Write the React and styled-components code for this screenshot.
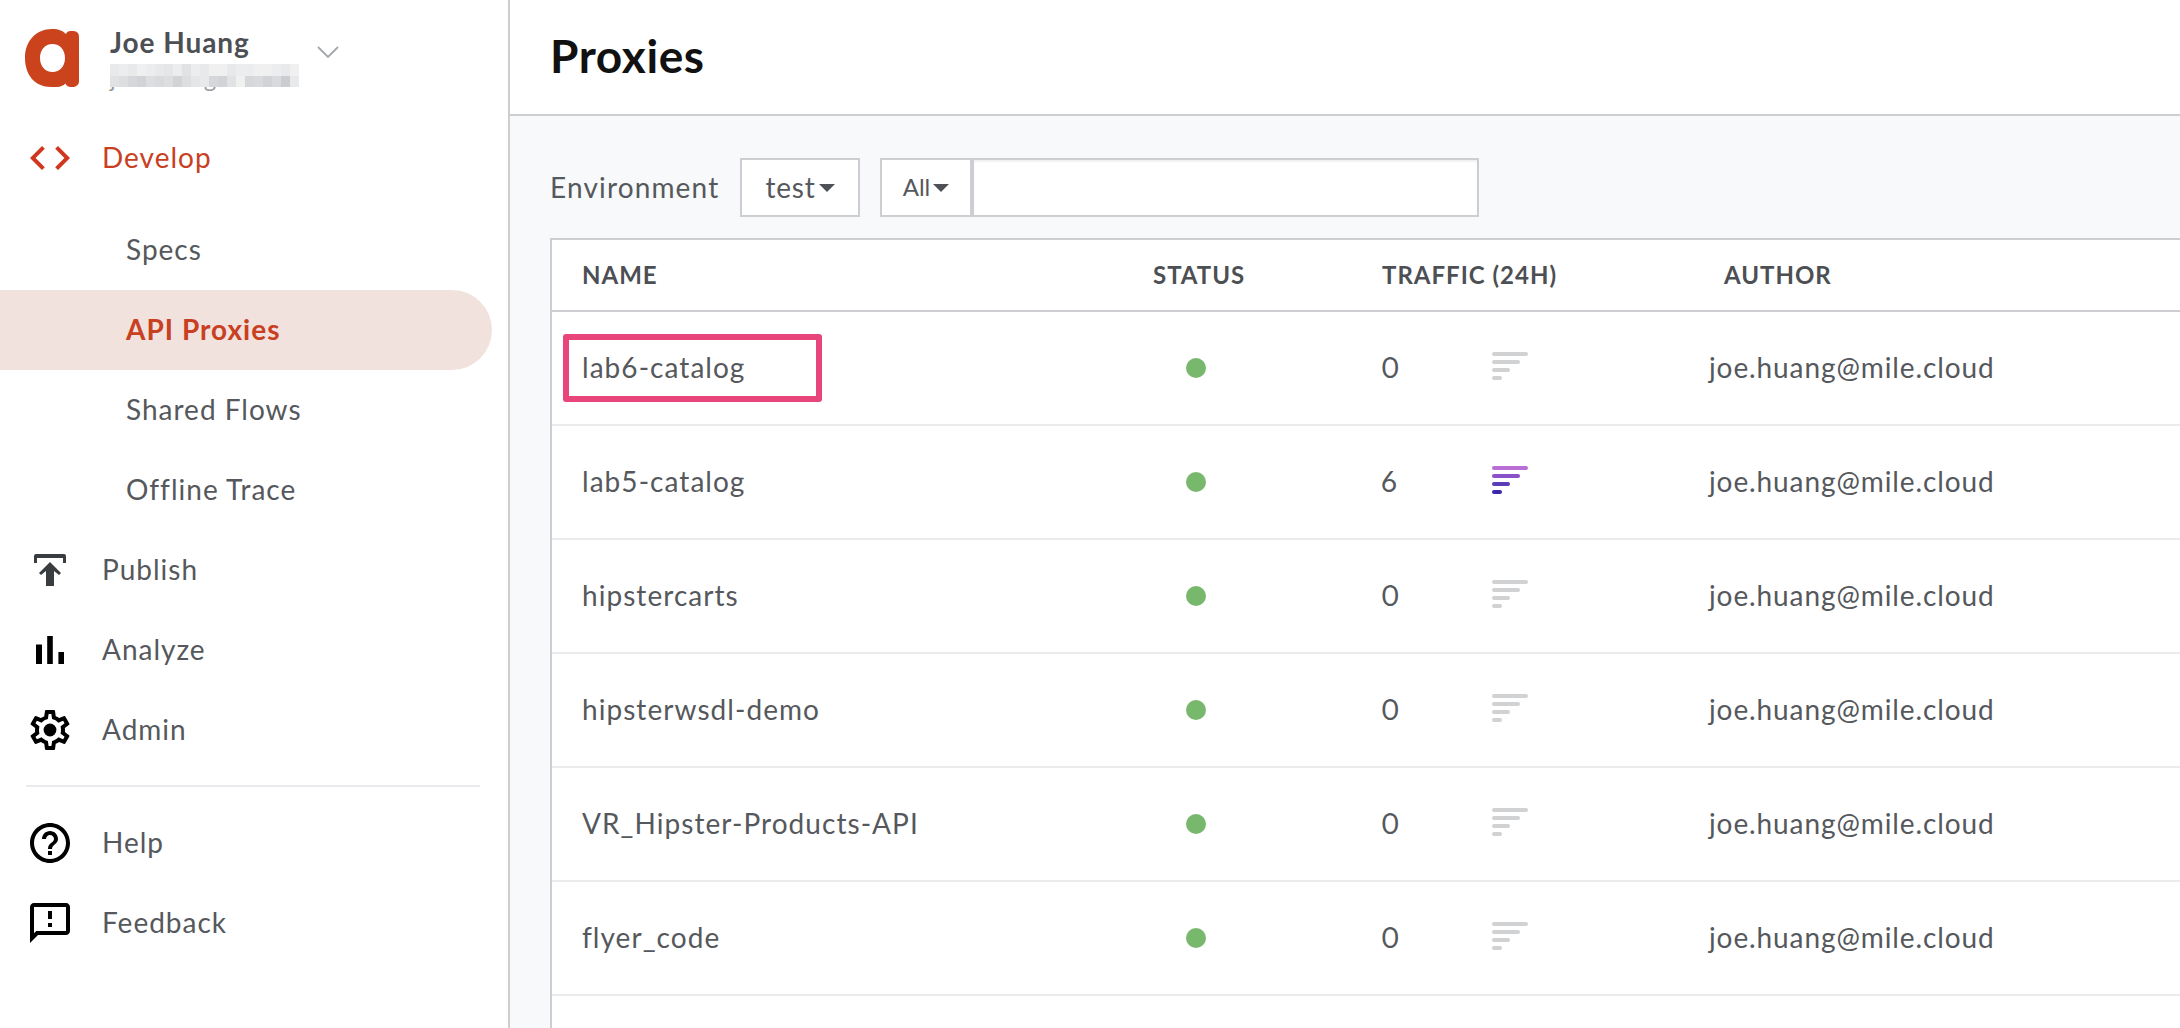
import React from 'react';
import styled, { createGlobalStyle } from 'styled-components';

const Global = createGlobalStyle`
  html, body { margin: 0; padding: 0; height: 100%; background: #fff; overflow: hidden; }
  * { box-sizing: border-box; }
  body { font-family: Lato, "Liberation Sans", sans-serif; color: #4a4d50; }
`;

const Page = styled.div`display: flex; width: 2180px; height: 1028px; overflow: hidden;`;
const Sidebar = styled.aside`width: 510px; flex: none; border-right: 2px solid #ccced2; background: #fff; display: flex; flex-direction: column;`;
const Account = styled.div`height: 118px; display: flex; padding: 29px 0 0 25px;`;
const Logo = styled.svg`width: 54px; height: 58px; flex: none;`;
const Who = styled.div`margin-left: 31px; width: 190px;`;
const Name = styled.div`font-size: 28px; font-weight: 700; line-height: 28px; margin-top: -1px; letter-spacing: 0.95px; color: #4c4f53;`;
const EmailWrap = styled.div`position: relative; height: 31px; margin-top: 7px; width: 189px; font-size: 24px; line-height: 30px; color: #9a9ca0; letter-spacing: 0.5px; white-space: nowrap;`;
const Mosaic = styled.div`position: absolute; left: 0; top: 1px; width: 189px; height: 23px; background: #fff; display: grid; grid-template-columns: repeat(21, 1fr); grid-template-rows: 1fr 1fr;`;
const Tile = styled.span`opacity: ${p => p.$o}; background: #b4b6bb;`;
const Caret = styled.svg`width: 22px; height: 12px; margin: 17px 0 0 17px; flex: none;`;

const Nav = styled.nav`display: flex; flex-direction: column;`;
const TopItem = styled.div`
  height: 80px; display: flex; align-items: center; padding-left: 26px;
  font-size: 28px; letter-spacing: 1px; color: ${p => p.$active ? '#c8401f' : '#55585c'};
`;
const IconSlot = styled.svg`width: 48px; height: 48px; flex: none; margin-right: 28px; fill: ${p => p.$c || '#000'};`;
const NavText = styled.span`margin-bottom: 2px;`;
const SubItem = styled.div`
  height: 80px; width: ${p => p.$active ? '492px' : 'auto'}; display: flex; align-items: center; padding: 0 0 2px 126px;
  font-size: 28px; letter-spacing: 1px;
  font-weight: ${p => p.$active ? 700 : 400};
  color: ${p => p.$active ? '#c8401f' : '#55585c'};
  background: ${p => p.$active ? '#f1e2de' : 'transparent'};
  border-radius: ${p => p.$active ? '0 40px 40px 0' : '0'};
`;
const Gap = styled.div`height: ${p => p.$h}px;`;
const Divider = styled.div`height: 2px; margin: 15px 28px 16px 26px; background: #e9eaee;`;

const Main = styled.main`flex: 1; min-width: 0; display: flex; flex-direction: column; background: #f8f9fa;`;
const Header = styled.header`height: 116px; flex: none; background: #fff; border-bottom: 2px solid #ccced2; display: flex; align-items: center; padding: 0 40px;`;
const Title = styled.h1`margin: 0 0 3px; font-size: 46px; font-weight: 700; color: #111; letter-spacing: 0.6px;`;
const Body = styled.div`flex: 1; padding: 42px 0 0 40px; overflow: hidden;`;
const Filters = styled.div`display: flex; align-items: center; height: 59px;`;
const Label = styled.label`font-size: 28px; letter-spacing: 1.15px; color: #55585c; width: 190px; margin-bottom: 2px;`;
const Drop = styled.div`
  height: 59px; display: flex; align-items: center; justify-content: center; background: #fff; padding-bottom: 2px;
  width: ${p => p.$w}px; border: 2px solid #ccced2; font-size: ${p => p.$s || 28}px; letter-spacing: ${p => p.$s ? 0 : 0.8}px; color: #55585c;
  margin-right: ${p => p.$mr || 0}px;
`;
const Tri = styled.i`width: 0; height: 0; border-left: 8px solid transparent; border-right: 8px solid transparent; border-top: 8px solid #4e5155; margin: 2px 0 0 3px;`;
const SearchBox = styled.div`width: 507px; height: 59px; background: #fff; border: 2px solid #ccced2; box-shadow: inset 0 2px 2px rgba(0,0,0,.06);`;

const Table = styled.div`margin-top: 21px; border: 2px solid #ccced2; border-right: 0; background: #fff; height: 900px;`;
const Row = styled.div`
  display: grid; grid-template-columns: 571px 229px 110px 1fr; align-items: center; padding-left: 30px;
  height: ${p => p.$head ? 72 : 114}px;
  border-bottom: 2px solid ${p => p.$head ? '#ccced2' : '#e9ebec'};
`;
const HeadCell = styled.div`font-size: 24px; font-weight: 700; letter-spacing: 1px; color: #4c4f53; white-space: nowrap; margin-bottom: 2px; padding-left: ${p => p.$pl || 0}px;`;
const Cell = styled.div`font-size: 28px; letter-spacing: 0.9px; color: #55585c; white-space: nowrap; position: relative; margin-bottom: 2px;`;
const NameCell = styled(Cell)`letter-spacing: 1.05px;`;
const Count = styled(Cell)`font-variant-numeric: proportional-nums; margin-left: -1px;`;
const Marker = styled.div`position: absolute; left: -19px; top: 50%; margin-top: -33px; width: 259px; height: 68px; border: 6px solid #e8467a; border-radius: 3px;`;
const Dot = styled.span`display: block; width: 20px; height: 20px; border-radius: 50%; background: #78b86c; margin-left: 33px;`;
const Traffic = styled.div`display: flex; align-items: center;`;
const Spark = styled.div`display: flex; flex-direction: column; gap: 4px; width: 36px; margin-bottom: 4px;`;
const Bar = styled.span`display: block; height: 4px; border-radius: 2px; width: ${p => p.$w}px; background: ${p => p.$c};`;
const Author = styled(Cell)`margin-left: 181px;`;

const rows = [
  ['lab6-catalog', 0, true],
  ['lab5-catalog', 6],
  ['hipstercarts', 0],
  ['hipsterwsdl-demo', 0],
  ['VR_Hipster-Products-API', 0],
  ['flyer_code', 0],
];
const grey = ['#d0d2d3', '#d0d2d3', '#d0d2d3', '#d0d2d3'];
const color = ['#b96fd6', '#8a52c8', '#5a3db8', '#3a28a8'];
const widths = [36, 28, 18, 10];
const tiles = [
  .3,.25,.3,.2,.25,.3,.35,.25,.4,.25,.3,.2,.2,.3,.25,.25,.2,.2,.25,.3,.2,
  .4,.45,.55,.6,.45,.5,.45,.6,.45,.35,.3,.55,.6,.4,.2,.55,.5,.6,.5,.7,.3,
];

export default function App() {
  return (
    <Page>
      <Global />
      <Sidebar>
        <Account>
          <Logo viewBox="0 0 54 58">
            <path fill="#cb431d" fillRule="evenodd" d="M27 0c7 0 11 2 14 5 .8-2.600 3-3 6-3 4 0 7 1 7 6v44c0 4-3 6-7 6-3.400 0-5.600-1-6.500-3.600C37 58 32 58 26 58 10 58 0 46 0 29 0 12 11 0 27 0zm.5 15C20 15 15 21 15 29s5 14 12.500 14S40 37 40 29s-5-14-12.500-14z" />
          </Logo>
          <Who>
            <Name>Joe Huang</Name>
            <EmailWrap>
              joe.huang
              <Mosaic>{tiles.map((o, i) => <Tile key={i} $o={o} />)}</Mosaic>
            </EmailWrap>
          </Who>
          <Caret viewBox="0 0 22 12"><path d="M1 1l10 10L21 1" fill="none" stroke="#a4a7ab" strokeWidth="1.800" /></Caret>
        </Account>
        <Nav>
          <TopItem $active>
            <IconSlot viewBox="0 0 24 24" $c="#d0371f"><path d="M9.400 16.600L4.800 12l4.600-4.600L8 6l-6 6 6 6 1.400-1.400zm5.200 0l4.600-4.600-4.600-4.600L16 6l6 6-6 6-1.400-1.400z" /></IconSlot>
            <NavText>Develop</NavText>
          </TopItem>
          <Gap $h={12} />
          <SubItem>Specs</SubItem>
          <SubItem $active>API Proxies</SubItem>
          <SubItem>Shared Flows</SubItem>
          <SubItem>Offline Trace</SubItem>
          <TopItem>
            <IconSlot viewBox="0 0 48 48" $c="#3a3d40"><path d="M8 17v-7a2 2 0 0 1 2-2h28a2 2 0 0 1 2 2v7h-3v-5H11v5zM24 16l11 11-2 2-5-4v15h-8V25l-5 4-2-2z" /></IconSlot>
            <NavText>Publish</NavText>
          </TopItem>
          <TopItem>
            <IconSlot viewBox="0 0 24 24"><path d="M5 9.200h3V19H5zM10.600 5h2.800v14h-2.800zm5.600 8H19v6h-2.800z" /></IconSlot>
            <NavText>Analyze</NavText>
          </TopItem>
          <TopItem>
            <IconSlot viewBox="0 0 24 24"><path d="M19.430 12.980c.04-.32.07-.64.07-.98 0-.34-.03-.66-.07-.98l2.110-1.650c.19-.15.24-.42.12-.64l-2-3.460c-.09-.16-.26-.25-.44-.25-.06 0-.12.01-.17.03l-2.490 1c-.52-.4-1.080-.73-1.690-.98l-.38-2.650C14.460 2.180 14.250 2 14 2h-4c-.25 0-.46.18-.49.42l-.38 2.650c-.61.25-1.170.59-1.690.98l-2.490-1c-.06-.02-.12-.03-.18-.03-.17 0-.34.09-.43.25l-2 3.460c-.13.22-.07.49.12.64l2.110 1.650c-.04.32-.07.65-.07.98 0 .33.03.66.07.98l-2.110 1.650c-.19.15-.24.42-.12.64l2 3.460c.09.16.26.25.44.25.06 0 .12-.01.17-.03l2.490-1c.52.4 1.080.73 1.690.98l.38 2.650c.03.24.24.42.49.42h4c.25 0 .46-.18.49-.42l.38-2.650c.61-.25 1.170-.59 1.690-.98l2.490 1c.06.02.12.03.18.03.17 0 .34-.09.43-.25l2-3.460c.12-.22.07-.49-.12-.64l-2.110-1.650zm-1.980-1.710c.04.31.05.52.05.73 0 .21-.02.43-.05.73l-.14 1.130.89.7 1.080.84-.7 1.210-1.270-.51-1.040-.42-.9.68c-.43.32-.84.56-1.250.73l-1.060.43-.16 1.130-.2 1.350h-1.400l-.19-1.350-.16-1.130-1.060-.43c-.43-.18-.83-.41-1.230-.71l-.91-.7-1.060.43-1.270.51-.7-1.210 1.080-.84.89-.7-.14-1.130c-.03-.31-.05-.54-.05-.74s.02-.43.05-.73l.14-1.130-.89-.7-1.080-.84.7-1.210 1.270.51 1.040.42.9-.68c.43-.32.84-.56 1.250-.73l1.060-.43.16-1.130.2-1.350h1.390l.19 1.350.16 1.130 1.060.43c.43.18.83.41 1.230.71l.91.7 1.060-.43 1.270-.51.7 1.210-1.070.85-.89.7.14 1.130z" /><circle cx="12" cy="12" r="3.200" /></IconSlot>
            <NavText>Admin</NavText>
          </TopItem>
          <Divider />
          <TopItem>
            <IconSlot viewBox="0 0 24 24"><path d="M11 18h2v-2h-2v2zm1-16C6.480 2 2 6.480 2 12s4.480 10 10 10 10-4.480 10-10S17.520 2 12 2zm0 18c-4.410 0-8-3.590-8-8s3.590-8 8-8 8 3.590 8 8-3.590 8-8 8zm0-14c-2.210 0-4 1.790-4 4h2c0-1.100.9-2 2-2s2 .9 2 2c0 2-3 1.750-3 5h2c0-2.250 3-2.500 3-5 0-2.210-1.790-4-4-4z" /></IconSlot>
            <NavText>Help</NavText>
          </TopItem>
          <TopItem>
            <IconSlot viewBox="0 0 24 24"><path d="M20 2H4c-1.100 0-1.990.9-1.990 2L2 22l4-4h14c1.100 0 2-.9 2-2V4c0-1.100-.9-2-2-2zm0 14H5.170L4 17.170V4h16v12zm-9-4h2v2h-2zm0-6h2v4h-2z" /></IconSlot>
            <NavText>Feedback</NavText>
          </TopItem>
        </Nav>
      </Sidebar>
      <Main>
        <Header><Title>Proxies</Title></Header>
        <Body>
          <Filters>
            <Label>Environment</Label>
            <Drop $w={120} $mr={20}>test<Tri /></Drop>
            <Drop $w={92} $s={24}>All<Tri /></Drop>
            <SearchBox />
          </Filters>
          <Table>
            <Row $head>
              <HeadCell>NAME</HeadCell>
              <HeadCell>STATUS</HeadCell>
              <HeadCell>TRAFFIC (24H)</HeadCell>
              <HeadCell $pl={232}>AUTHOR</HeadCell>
            </Row>
            {rows.map(([name, n, marked]) => (
              <Row key={name}>
                <NameCell>{name}{marked && <Marker />}</NameCell>
                <div><Dot /></div>
                <Count>{n}</Count>
                <Traffic>
                  <Spark>{widths.map((w, i) => <Bar key={i} $w={w} $c={(n ? color : grey)[i]} />)}</Spark>
                  <Author>joe.huang@mile.cloud</Author>
                </Traffic>
              </Row>
            ))}
          </Table>
        </Body>
      </Main>
    </Page>
  );
}
